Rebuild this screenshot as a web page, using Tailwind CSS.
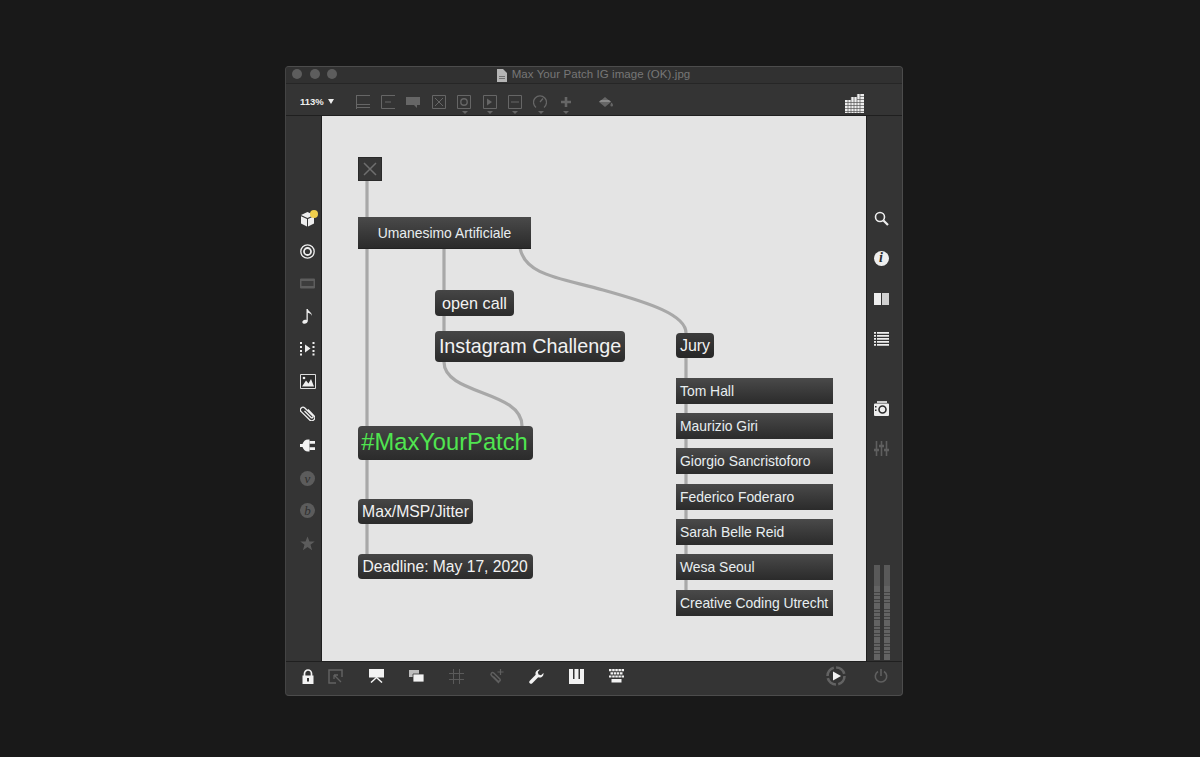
<!DOCTYPE html>
<html lang="en">
<head>
    <meta charset="UTF-8">
    <meta name="viewport" content="width=device-width, initial-scale=1.0">
    <title>Max Your Patch IG image (OK).jpg</title>
    <script src="https://cdn.jsdelivr.net/npm/@tailwindcss/browser@4"></script>
</head>
<body class="bg-[#191919] h-[757px] overflow-hidden [font-family:'Liberation_Sans',sans-serif]">
    <div class="ml-[285px] pt-[66px] w-[618px]">
        <div class="h-[630px] flex flex-col rounded-[4px] bg-[#343434] border border-[#4c4c4c] border-l-[#444] overflow-hidden">
            <!-- Title bar -->
            <div class="relative h-[17px] shrink-0 flex items-center justify-center gap-[5px] pr-[2px] bg-[#313131] border-b border-[#262626]">
                <div class="absolute left-[6px] top-[2px] flex gap-[7.5px]">
                    <span class="w-[10px] h-[10px] rounded-full bg-[#5d5d5d]"></span>
                    <span class="w-[10px] h-[10px] rounded-full bg-[#5d5d5d]"></span>
                    <span class="w-[10px] h-[10px] rounded-full bg-[#5d5d5d]"></span>
                </div>
                <svg class="w-[11px] h-[13px]" viewBox="0 0 11 13"><path d="M1 0h6l4 4v9H1z" fill="#b5b5b5"/><path d="M3 7h6v1H3zM3 9h6v1H3z" fill="#707070"/></svg>
                <span class="text-[11.5px] leading-none text-[#777] tracking-[0.07px] whitespace-nowrap">Max Your Patch IG image (OK).jpg</span>
            </div>
            <!-- Toolbar -->
            <div class="h-[32px] shrink-0 flex items-start bg-[#343434] border-b border-[#1f1f1f] relative">
                <div class="w-[70px] pl-[14px] pt-[13px] flex items-center gap-[4px] text-[9.5px] leading-none font-bold text-[#eee]">
                    <span>113%</span>
                    <svg class="w-[6px] h-[5px]" viewBox="0 0 6 5"><path d="M0 0h6L3 5z" fill="#eee"/></svg>
                </div>
                <div class="flex pt-[11px] -ml-[6px]">
                    <div class="w-[25.4px] flex justify-center"><svg class="w-[14px] h-[14px]" viewBox="0 0 14 14" fill="none" stroke="#666"><path d="M0 .5h14M.5 0v14M0 9.5h14M0 12.5h14"/></svg></div>
                    <div class="w-[25.4px] flex justify-center"><svg class="w-[14px] h-[14px]" viewBox="0 0 14 14" fill="none" stroke="#666"><path d="M14 .5H.5v13H14"/><path d="M5 8V6M7 8V6M9 8V6"/></svg></div>
                    <div class="w-[25.4px] flex justify-center"><svg class="w-[14px] h-[14px]" viewBox="0 0 14 14"><path d="M0 2h14v8h-3v3l-3-3H0z" fill="#666"/></svg></div>
                    <div class="w-[25.4px] flex justify-center"><svg class="w-[14px] h-[14px]" viewBox="0 0 14 14" fill="none" stroke="#666"><path d="M.5.5h13v13H.5zM3 3l8 8M11 3l-8 8"/></svg></div>
                    <div class="w-[25.4px] relative flex justify-center"><svg class="w-[14px] h-[14px]" viewBox="0 0 14 14" fill="none" stroke="#666"><path d="M.5.5h13v13H.5z"/><circle cx="7" cy="7" r="3.2" stroke-width="1.4"/></svg><svg class="absolute left-[10px] top-[16px] w-[6px] h-[3px]" viewBox="0 0 6 3"><path d="M0 0h6L3 3z" fill="#666"/></svg></div>
                    <div class="w-[25.4px] relative flex justify-center"><svg class="w-[14px] h-[14px]" viewBox="0 0 14 14" fill="none" stroke="#666"><path d="M.5.5h13v13H.5z"/><path d="M4 3.5l5 3.5-5 3.500z" fill="#666" stroke="none"/></svg><svg class="absolute left-[10px] top-[16px] w-[6px] h-[3px]" viewBox="0 0 6 3"><path d="M0 0h6L3 3z" fill="#666"/></svg></div>
                    <div class="w-[25.4px] relative flex justify-center"><svg class="w-[14px] h-[14px]" viewBox="0 0 14 14" fill="none" stroke="#666"><path d="M.5.5h13v13H.5zM3 7h8" /></svg><svg class="absolute left-[10px] top-[16px] w-[6px] h-[3px]" viewBox="0 0 6 3"><path d="M0 0h6L3 3z" fill="#666"/></svg></div>
                    <div class="w-[25.4px] relative flex justify-center"><svg class="w-[14px] h-[14px]" viewBox="0 0 14 14" fill="none" stroke="#666" stroke-width="1.3"><path d="M3 12.500A6.500 6.500 0 1 1 11 12.500M7 7l3-3.500"/></svg><svg class="absolute left-[10px] top-[16px] w-[6px] h-[3px]" viewBox="0 0 6 3"><path d="M0 0h6L3 3z" fill="#666"/></svg></div>
                    <div class="w-[25.4px] relative flex justify-center"><svg class="w-[14px] h-[14px]" viewBox="0 0 14 14"><path d="M5.700 2h2.600v3.700H12v2.600H8.300V12H5.700V8.300H2V5.700h3.700z" fill="#666"/></svg><svg class="absolute left-[10px] top-[16px] w-[6px] h-[3px]" viewBox="0 0 6 3"><path d="M0 0h6L3 3z" fill="#666"/></svg></div>
                    <div class="w-[14px] ml-[20px] flex justify-center"><svg class="w-[16px] h-[14px] shrink-0" viewBox="0 0 16 14"><path d="M1 7l6-5 6 5-6 5z" fill="#666"/><path d="M3 5h8l2 2H1z" fill="#8a8a8a"/><path d="M13.500 7.500c1 1.300 1.500 2 1.500 2.700a1.300 1.300 0 0 1-2.600 0c0-.7.500-1.400 1.100-2.700z" fill="#666"/></svg></div>
                </div>
                <!-- grid toggle -->
                <svg class="ml-auto mr-[38px] mt-[10px] w-[19px] h-[19px]" viewBox="0 0 19 19">
                    <path d="M0 6h6V3h6V0h7v19H0z" fill="#eee"/>
                    <path d="M0 8.500h19M0 11.500h19M0 14.500h19M0 17.500h19M12 5.500h7M15 2.500h4M3 6v13M6 3v16M9 3v16M12 0v19M15 0v19" stroke="#555" stroke-width=".7" fill="none"/>
                </svg>
            </div>
            <!-- Middle -->
            <div class="flex h-[545px] shrink-0">
                <!-- Left sidebar -->
                <div class="w-[36px] shrink-0 pt-[87px] pl-[14px] flex flex-col border-r border-[#1f1f1f]">
                    <div class="h-[32.400px] flex items-center relative">
                        <svg class="w-[15px] h-[16px]" viewBox="0 0 15 16"><path d="M7.500 1L14 4 7.500 7 1 4z" fill="#eee"/><path d="M1 5.200l6 2.800v7.500l-6-3zM14 5.200L8 8v7.500l6-3z" fill="#eee"/></svg>
                        <span class="absolute left-[10px] top-[7px] w-[8px] h-[8px] rounded-full bg-[#f0cf4c]"></span>
                    </div>
                    <div class="h-[32.400px] flex items-center"><svg class="w-[15px] h-[15px]" viewBox="0 0 15 15" fill="none" stroke="#eee"><circle cx="7.500" cy="7.500" r="6.700" stroke-width="1.300"/><circle cx="7.500" cy="7.500" r="3.500" stroke-width="1.800"/></svg></div>
                    <div class="h-[32.400px] flex items-center"><svg class="w-[15px] h-[11px]" viewBox="0 0 15 11"><path d="M1 .5h13a1 1 0 0 1 1 1v8a1 1 0 0 1-1 1H1a1 1 0 0 1-1-1v-8a1 1 0 0 1 1-1z" fill="#5d5d5d"/><path d="M1.500 3h12v5h-12z" fill="#3d3d3d"/></svg></div>
                    <div class="h-[32.400px] flex items-center"><svg class="w-[15px] h-[16px]" viewBox="0 0 15 16"><path d="M6.500 1h1.300c.3 2.500 4.500 3 4 7-.3-1.800-2-3-4-3.300V13c0 1.700-2 3-3.700 2.800C2.500 15.600 1.800 14.200 2.700 13c1-1.200 2.800-1.500 3.800-.9z" fill="#eee"/></svg></div>
                    <div class="h-[32.400px] flex items-center"><svg class="w-[15px] h-[15px]" viewBox="0 0 15 15"><path d="M0 1h2v2H0zM0 5h2v2H0zM0 9h2v2H0zM0 12.500h2v2H0zM12.500 1h2v2h-2zM12.500 5h2v2h-2zM12.500 9h2v2h-2zM12.500 12.500h2v2h-2zM5 3.500l5.500 4L5 11.500z" fill="#eee"/></svg></div>
                    <div class="h-[32.400px] flex items-center"><svg class="w-[16px] h-[15px]" viewBox="0 0 16 15"><path d="M.5.500h15v14H.5z" fill="#2c2c2c" stroke="#ddd"/><path d="M2 12.500l4-6 2.500 3L11 5l3 7.500z" fill="#eee"/><circle cx="4" cy="4" r="1.300" fill="#eee"/></svg></div>
                    <div class="h-[32.400px] flex items-center"><svg class="w-[15px] h-[15px]" viewBox="0 0 15 15" fill="none" stroke="#eee" stroke-width="1.300"><path d="M4.500 5L11 11.500a1.200 1.200 0 0 0 1.700-1.700L4.800 2a2.500 2.500 0 0 0-3.600 3.600L9.500 13.800a3 3 0 0 0 4.400-4.200L8 3.500"/></svg></div>
                    <div class="h-[32.400px] flex items-center"><svg class="w-[15px] h-[13px]" viewBox="0 0 15 13"><path d="M0 5h2.500C3.500 2.500 5 .5 8 .5h1.500v12H8c-3 0-4.500-2-5.500-4.500H0z" fill="#f2f2f2"/><path d="M9.500 2h5.500v2.700H9.500zM9.500 8.300h5.500V11H9.500z" fill="#f2f2f2"/></svg></div>
                    <div class="h-[32.400px] flex items-center"><span class="w-[15px] h-[15px] rounded-full bg-[#5c5c5c] flex items-center justify-center text-[13px] leading-none italic text-[#2f2f2f] [font-family:'Liberation_Serif',serif]">v</span></div>
                    <div class="h-[32.400px] flex items-center"><span class="w-[15px] h-[15px] rounded-full bg-[#5c5c5c] flex items-center justify-center text-[13px] leading-none italic text-[#2f2f2f] [font-family:'Liberation_Serif',serif]">b</span></div>
                    <div class="h-[32.400px] flex items-center"><svg class="w-[15px] h-[15px]" viewBox="0 0 15 15"><path d="M7.500 .5l2 5h5.200l-4.200 3.300 1.600 5.500-4.600-3.200-4.600 3.200 1.600-5.500L.3 5.500h5.200z" fill="#5c5c5c"/></svg></div>
                </div>
                <!-- Canvas -->
                <div class="relative w-[544px] h-[545px] bg-[#e4e4e4] shrink-0 text-[#f2f2f2]">
                    <svg class="absolute inset-0 w-[544px] h-[545px]" viewBox="322 116 544 545" fill="none" stroke="#a8a8a8" stroke-width="3.200">
                        <path d="M367 181V554"/>
                        <path d="M444 248V362C444 395 522 390 522 426"/>
                        <path d="M520 248C525 275 560 278 603 290C650 303 686 315 686 333V590"/>
                    </svg>
                    <div class="absolute left-[36px] top-[41px] w-[24px] h-[24px] bg-[#373737] border border-[#2a2a2a] flex items-center justify-center">
                        <svg class="w-[14px] h-[14px]" viewBox="0 0 14 14" stroke="#6e6e6e" stroke-width="1.500"><path d="M1 1l12 12M13 1L1 13"/></svg>
                    </div>
                    <div class="absolute left-[36px] top-[101px] w-[173px] h-[32px] pt-[1px] flex items-center justify-center whitespace-nowrap text-[13.900px] text-[#e8eef0] bg-linear-to-b from-[#4a4a4a] to-[#2b2b2b] border-b border-[#222]">Umanesimo Artificiale</div>
                    <div class="absolute left-[113px] top-[174px] w-[79px] h-[26px] rounded-[4px] flex items-center justify-center whitespace-nowrap text-[16.200px] bg-linear-to-b from-[#464646] to-[#2b2b2b]">open call</div>
                    <div class="absolute left-[113px] top-[215px] w-[190px] h-[31px] rounded-[4px] flex items-center justify-center whitespace-nowrap text-[19.750px] bg-linear-to-b from-[#464646] to-[#2b2b2b]">Instagram Challenge</div>
                    <div class="absolute left-[354px] top-[217px] w-[38px] h-[25px] rounded-[4px] flex items-center justify-center whitespace-nowrap text-[16px] bg-linear-to-b from-[#3c3c3c] to-[#262626]">Jury</div>
                    <div class="absolute left-[36px] top-[310px] w-[175px] h-[34px] pr-[2px] rounded-[4px] flex items-center justify-center whitespace-nowrap text-[23.700px] text-[#50e550] bg-linear-to-b from-[#454545] to-[#2b2b2b]">#MaxYourPatch</div>
                    <div class="absolute left-[36px] top-[383px] w-[115px] h-[25px] rounded-[4px] flex items-center justify-center whitespace-nowrap text-[15.750px] bg-linear-to-b from-[#464646] to-[#2b2b2b]">Max/MSP/Jitter</div>
                    <div class="absolute left-[36px] top-[438px] w-[175px] h-[25px] pr-[1px] rounded-[4px] flex items-center justify-center whitespace-nowrap text-[15.650px] bg-linear-to-b from-[#464646] to-[#2b2b2b]">Deadline: May 17, 2020</div>
                    <div class="absolute left-[354px] top-[262px] w-[157px] h-[26px] pl-[4px] pt-[1px] flex items-center whitespace-nowrap text-[13.900px] text-[#e8eef0] bg-linear-to-b from-[#4a4a4a] to-[#2b2b2b]">Tom Hall</div>
                    <div class="absolute left-[354px] top-[297px] w-[157px] h-[26px] pl-[4px] pt-[1px] flex items-center whitespace-nowrap text-[13.900px] text-[#e8eef0] bg-linear-to-b from-[#4a4a4a] to-[#2b2b2b]">Maurizio Giri</div>
                    <div class="absolute left-[354px] top-[332px] w-[157px] h-[26px] pl-[4px] pt-[1px] flex items-center whitespace-nowrap text-[13.900px] text-[#e8eef0] bg-linear-to-b from-[#4a4a4a] to-[#2b2b2b]">Giorgio Sancristoforo</div>
                    <div class="absolute left-[354px] top-[368px] w-[157px] h-[26px] pl-[4px] pt-[1px] flex items-center whitespace-nowrap text-[13.900px] text-[#e8eef0] bg-linear-to-b from-[#4a4a4a] to-[#2b2b2b]">Federico Foderaro</div>
                    <div class="absolute left-[354px] top-[403px] w-[157px] h-[26px] pl-[4px] pt-[1px] flex items-center whitespace-nowrap text-[13.900px] text-[#e8eef0] bg-linear-to-b from-[#4a4a4a] to-[#2b2b2b]">Sarah Belle Reid</div>
                    <div class="absolute left-[354px] top-[438px] w-[157px] h-[26px] pl-[4px] pt-[1px] flex items-center whitespace-nowrap text-[13.900px] text-[#e8eef0] bg-linear-to-b from-[#4a4a4a] to-[#2b2b2b]">Wesa Seoul</div>
                    <div class="absolute left-[354px] top-[474px] w-[157px] h-[26px] pl-[4px] pt-[1px] flex items-center whitespace-nowrap text-[13.900px] text-[#e8eef0] bg-linear-to-b from-[#4a4a4a] to-[#2b2b2b]">Creative Coding Utrecht</div>
                </div>
                <!-- Right sidebar -->
                <div class="flex-1 border-l border-[#1f1f1f] pl-[6.500px] flex flex-col">
                    <div class="h-[82px] shrink-0"></div>
                    <div class="h-[40.300px] flex items-center"><svg class="w-[15px] h-[15px]" viewBox="0 0 15 15" fill="none" stroke="#eee"><circle cx="6" cy="6" r="4.500" stroke-width="1.600"/><path d="M9.500 9.500l4.500 4.500" stroke-width="2.200"/></svg></div>
                    <div class="h-[40.300px] flex items-center"><span class="w-[15px] h-[15px] rounded-full bg-[#eee] flex items-center justify-center text-[14px] leading-none font-bold italic text-[#2b2b2b] [font-family:'Liberation_Serif',serif]">i</span></div>
                    <div class="h-[40.300px] flex items-center"><svg class="w-[15px] h-[12px]" viewBox="0 0 15 12"><path d="M0 0h7v12H0z" fill="#eee"/><path d="M8 0h7v12H8z" fill="#d0d0d0"/></svg></div>
                    <div class="h-[40.300px] flex items-center"><svg class="w-[15px] h-[14px]" viewBox="0 0 15 14"><path d="M0 0h2v1.800H0zM3 0h12v1.800H3zM0 3h2v1.800H0zM3 3h12v1.800H3zM0 6h2v1.800H0zM3 6h12v1.800H3zM0 9h2v1.800H0zM3 9h12v1.800H3zM0 12h2v1.800H0zM3 12h12v1.800H3z" fill="#eee"/></svg></div>
                    <div class="h-[30px] shrink-0"></div>
                    <div class="h-[40.300px] -mt-[1px] flex items-center"><svg class="w-[15px] h-[15px]" viewBox="0 0 15 15"><path d="M3 0h10v2H3z" fill="#ccc"/><path d="M1 2.500h13a1 1 0 0 1 1 1V14a1 1 0 0 1-1 1H1a1 1 0 0 1-1-1V3.500a1 1 0 0 1 1-1z" fill="#eee"/><circle cx="8.500" cy="8.500" r="3.500" fill="none" stroke="#2b2b2b" stroke-width="1.600"/><path d="M1 5h1.500v1.500H1zM1 8.500h1.500V10H1z" fill="#2b2b2b"/></svg></div>
                    <div class="h-[40.300px] flex items-center"><svg class="w-[15px] h-[15px]" viewBox="0 0 15 15" fill="none" stroke="#5f5f5f" stroke-width="1.600"><path d="M2.500 0v15M7.500 0v15M12.500 0v15"/><path d="M0 9h5M5 5h5M10 9h5" stroke-width="2.400"/></svg></div>
                    <!-- Level meters -->
                    <div class="mt-auto mb-[1px] flex gap-[3.500px]">
                        <div class="w-[6.500px] h-[95px] flex flex-col"><div class="h-[21px] bg-[#595959]"></div><div class="flex-1 bg-[repeating-linear-gradient(to_bottom,#636363_0,#636363_2.500px,#424242_2.500px,#424242_3.400px)]"></div></div>
                        <div class="w-[6.500px] h-[95px] flex flex-col"><div class="h-[21px] bg-[#595959]"></div><div class="flex-1 bg-[repeating-linear-gradient(to_bottom,#636363_0,#636363_2.500px,#424242_2.500px,#424242_3.400px)]"></div></div>
                    </div>
                </div>
            </div>
            <!-- Bottom bar -->
            <div class="flex-1 border-t border-[#1f1f1f] flex items-center pl-[15px] pr-[14px] pb-[5px]">
                <svg class="w-[14px] h-[15px] mr-[13px]" viewBox="0 0 14 15"><path d="M3.500 7V4.500a3.500 3.500 0 0 1 7 0V7" fill="none" stroke="#f2f2f2" stroke-width="1.700"/><path d="M1.500 6.500h11v8.500h-11z" fill="#f2f2f2"/><path d="M6 9h2v3.500H6z" fill="#333"/></svg>
                <svg class="w-[15px] h-[15px] mr-[26px]" viewBox="0 0 15 15" fill="none" stroke="#616161" stroke-width="1.500"><path d="M14 8V1H1v13h7"/><path d="M6 6l7 7M6 6h4M6 6v4" stroke-width="1.300"/></svg>
                <svg class="w-[15px] h-[14px] mr-[25px]" viewBox="0 0 15 14"><path d="M0 0h15v8.500H0z" fill="#f2f2f2"/><path d="M7.500 8.500L2 13.500M7.500 8.500l5.500 5" stroke="#f2f2f2" stroke-width="1.500"/></svg>
                <svg class="w-[15px] h-[12px] mr-[25px]" viewBox="0 0 15 12"><path d="M0 0h10v7H0z" fill="#bdbdbd"/><path d="M4 4h11v8H4z" fill="#f2f2f2" stroke="#333" stroke-width=".8"/></svg>
                <svg class="w-[15px] h-[15px] mr-[25px]" viewBox="0 0 15 15" stroke="#5a5a5a"><path d="M4.500 0v15M10.500 0v15M0 4.500h15M0 10.500h15"/></svg>
                <svg class="w-[15px] h-[15px] mr-[25px]" viewBox="0 0 15 15" fill="none" stroke="#5f5f5f" stroke-width="1.500"><path d="M10 14L2.500 6.500C1 5 3 2.500 4.800 4l6 6c1.300 1.500-.8 3-2 2L4.500 7.800"/><path d="M11.500 0v6M8.500 3h6" stroke-width="1.200"/></svg>
                <svg class="w-[15px] h-[15px] mr-[25px]" viewBox="0 0 15 15"><path d="M10.500 .5a4 4 0 0 0-3.800 5.300L.800 11.700a1.700 1.700 0 0 0 2.500 2.500l5.900-5.900A4 4 0 0 0 14.500 4L12 6.200l-2.500-.7-.7-2.500L11 .6z" fill="#f2f2f2"/></svg>
                <svg class="w-[15px] h-[15px] mr-[25px]" viewBox="0 0 15 15"><path d="M0 0h15v15H0z" fill="#f2f2f2"/><path d="M4 0h1.500v10H4zM9.500 0H11v10H9.500z" fill="#333"/></svg>
                <svg class="w-[15px] h-[14px]" viewBox="0 0 15 14"><path d="M0 0h2.500v2.200H0zM3.200 0h2.500v2.200H3.200zM6.300 0h2.500v2.200H6.300zM9.400 0h2.500v2.200H9.400zM12.500 0H15v2.200h-2.500zM1.500 3.200H4v2.200H1.500zM4.700 3.200h2.500v2.200H4.700zM7.800 3.200h2.500v2.200H7.800zM11 3.200h2.500v2.200H11zM0 6.400h2.500v2.200H0zM3.200 6.400h2.500v2.200H3.200zM6.300 6.400h2.500v2.200H6.300zM9.400 6.400h2.500v2.200H9.400zM12.500 6.400H15v2.200h-2.500zM2.500 10h10v3.500h-10z" fill="#f2f2f2"/></svg>
                <svg class="ml-auto w-[20px] h-[20px] mr-[28px]" viewBox="0 0 20 20"><circle cx="10" cy="10" r="8.500" fill="none" stroke="#626262" stroke-width="2.600" stroke-dasharray="11 2.300"/><path d="M7 5.500l8 4.500-8 4.500z" fill="#f2f2f2"/></svg>
                <svg class="w-[14px] h-[14px]" viewBox="0 0 14 14" fill="none" stroke="#5f5f5f" stroke-width="1.600"><path d="M7 0v7M4 2.500a5.700 5.700 0 1 0 6 0"/></svg>
            </div>
        </div>
    </div>
</body>
</html>
